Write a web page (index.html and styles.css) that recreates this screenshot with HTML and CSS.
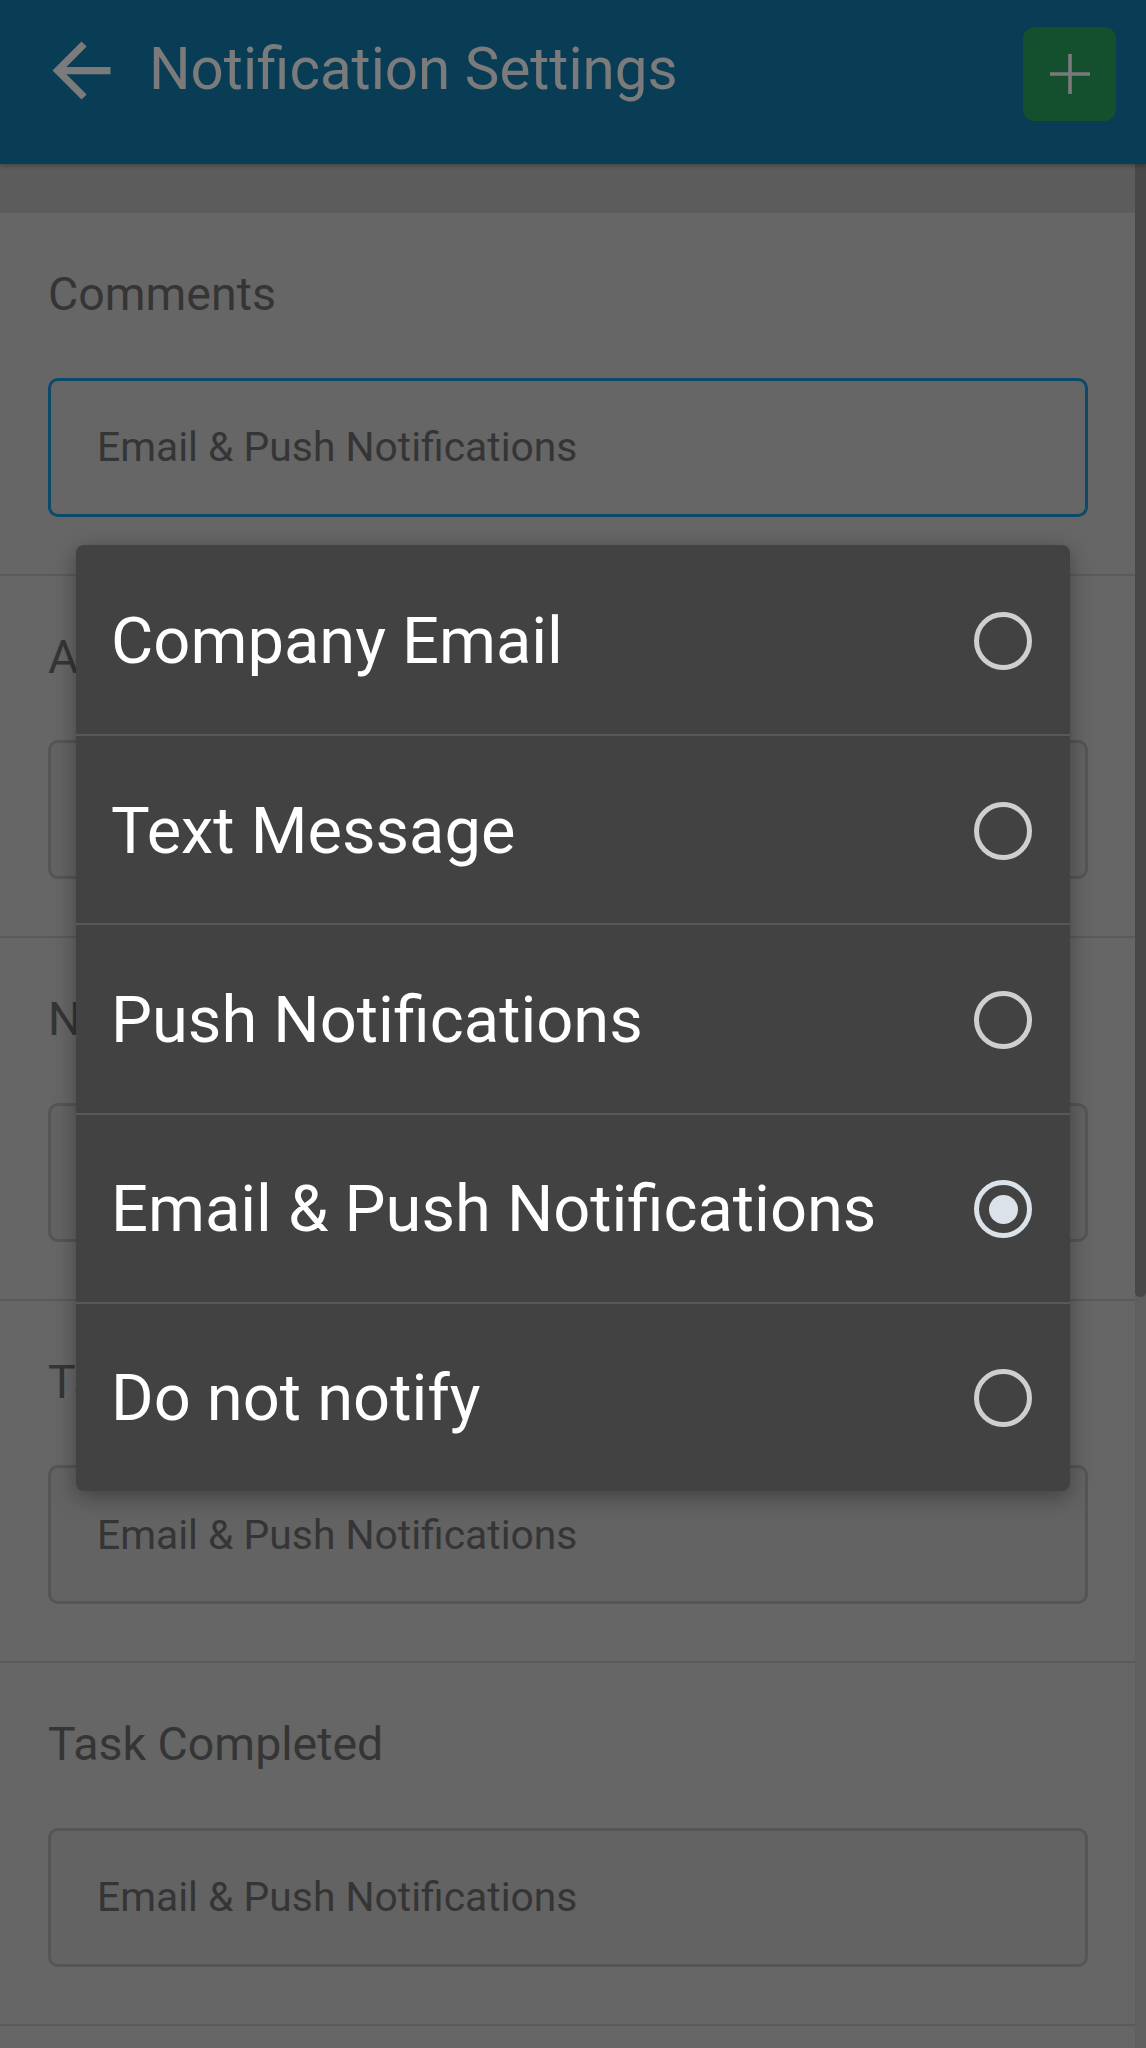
FILE: index.html
```html
<!DOCTYPE html>
<html lang="en">
<head>
<meta charset="utf-8">
<title>Notification Settings</title>
<link rel="stylesheet" href="styles.css">
</head>
<body>
<div class="screen">
  <header class="appbar">
    <svg class="back" viewBox="0 0 24 24" aria-hidden="true"><path d="M20 11H7.83l5.59-5.59L12 4l-8 8 8 8 1.41-1.41L7.83 13H20v-2z"/></svg>
    <h1 class="title">Notification Settings</h1>
    <button class="add" type="button" aria-label="Add">
      <svg viewBox="0 0 40 40" aria-hidden="true"><path d="M20 0v40M0 20h40"/></svg>
    </button>
  </header>

  <main class="content">
    <section class="setting">
      <div class="label">Comments</div>
      <div class="field focused">Email &amp; Push Notifications</div>
    </section>
    <section class="setting">
      <div class="label">Assigned to Me</div>
      <div class="field">Email &amp; Push Notifications</div>
    </section>
    <section class="setting">
      <div class="label">New Task</div>
      <div class="field">Email &amp; Push Notifications</div>
    </section>
    <section class="setting">
      <div class="label">Task Assigned</div>
      <div class="field">Email &amp; Push Notifications</div>
    </section>
    <section class="setting">
      <div class="label">Task Completed</div>
      <div class="field">Email &amp; Push Notifications</div>
    </section>
    <section class="setting">
      <div class="label">Task Overdue</div>
      <div class="field">Email &amp; Push Notifications</div>
    </section>
  </main>

  <div class="scroll-track"><div class="scroll-thumb"></div></div>

  <ul class="menu">
    <li class="option"><span class="option-text">Company Email</span><span class="radio"></span></li>
    <li class="option"><span class="option-text">Text Message</span><span class="radio"></span></li>
    <li class="option"><span class="option-text">Push Notifications</span><span class="radio"></span></li>
    <li class="option"><span class="option-text">Email &amp; Push Notifications</span><span class="radio checked"></span></li>
    <li class="option"><span class="option-text">Do not notify</span><span class="radio"></span></li>
  </ul>
</div>
</body>
</html>
```

FILE: styles.css
```css
* { box-sizing: border-box; }

html, body {
  margin: 0;
  padding: 0;
}

body {
  width: 1146px;
  height: 2048px;
  overflow: hidden;
  background: #5c5c5c;
  font-family: Roboto, "Noto Sans", "Liberation Sans", sans-serif;
}

.screen {
  position: relative;
  width: 1146px;
  height: 2048px;
  overflow: hidden;
}

/* ---------- App bar ---------- */
.appbar {
  position: relative;
  z-index: 2;
  height: 164px;
  display: flex;
  align-items: center;
  padding: 0 30px 24px 38px;
  background: #093d56;
  box-shadow: 0 2px 4px rgba(0, 0, 0, 0.25);
}

.back {
  width: 87px;
  height: 87px;
  flex: none;
  fill: #7b7b7b;
}

.title {
  margin: 0 0 0 24px;
  flex: 1;
  font-size: 58.3px;
  font-weight: 400;
  line-height: 1.2;
  color: #7b7b7b;
  white-space: nowrap;
}

.add {
  width: 93px;
  height: 94px;
  margin-top: 7px;
  padding: 0;
  border: none;
  border-radius: 12px;
  background: #14502e;
  display: flex;
  align-items: center;
  justify-content: center;
}

.add svg {
  width: 40px;
  height: 40px;
  stroke: #7a7a7a;
  stroke-width: 3.6;
  fill: none;
}

/* ---------- Settings list ---------- */
.content {
  padding-top: 49px;
}

.setting {
  height: 362.5px;
  padding: 54px 58px 0 48px;
  background: #666666;
  border-bottom: 2.5px solid #5a5a5a;
}

.label {
  font-size: 46.5px;
  line-height: 1.2;
  color: #353535;
  white-space: nowrap;
}

.field {
  margin-top: 55px;
  height: 139px;
  display: flex;
  align-items: center;
  padding: 0 0 0 46px;
  border: 3px solid #555555;
  border-radius: 10px;
  background: #636363;
  font-size: 40.8px;
  color: #353535;
  white-space: nowrap;
}

.field.focused {
  border-color: #0b4a68;
  background: #666666;
}

/* ---------- Scrollbar (overlay) ---------- */
.scroll-track {
  position: absolute;
  top: 164px;
  right: 0;
  width: 11px;
  height: 1884px;
  background: #5f5f5f;
}

.scroll-thumb {
  height: 1133px;
  background: #484848;
  border-radius: 0 0 6px 6px;
}

/* ---------- Dropdown menu (overlay) ---------- */
.menu {
  position: absolute;
  z-index: 3;
  left: 76px;
  top: 545px;
  width: 994px;
  margin: 0;
  padding: 0;
  list-style: none;
  background: #424242;
  border-radius: 8px;
  box-shadow: 0 6px 22px rgba(0, 0, 0, 0.35);
  overflow: hidden;
}

.option {
  height: 189.2px;
  display: flex;
  align-items: center;
  justify-content: space-between;
  padding: 2px 38px 0 35px;
  border-top: 2.5px solid #585858;
}

.option:first-child {
  border-top: none;
}

.option-text {
  font-size: 65px;
  line-height: 1.2;
  color: #ffffff;
  white-space: nowrap;
}

.radio {
  flex: none;
  width: 58px;
  height: 58px;
  border: 5.5px solid #cfcfcf;
  border-radius: 50%;
  display: flex;
  align-items: center;
  justify-content: center;
}

.radio.checked {
  border-color: #dce2ea;
}

.radio.checked::after {
  content: "";
  width: 29px;
  height: 29px;
  border-radius: 50%;
  background: #dce2ea;
}
```
